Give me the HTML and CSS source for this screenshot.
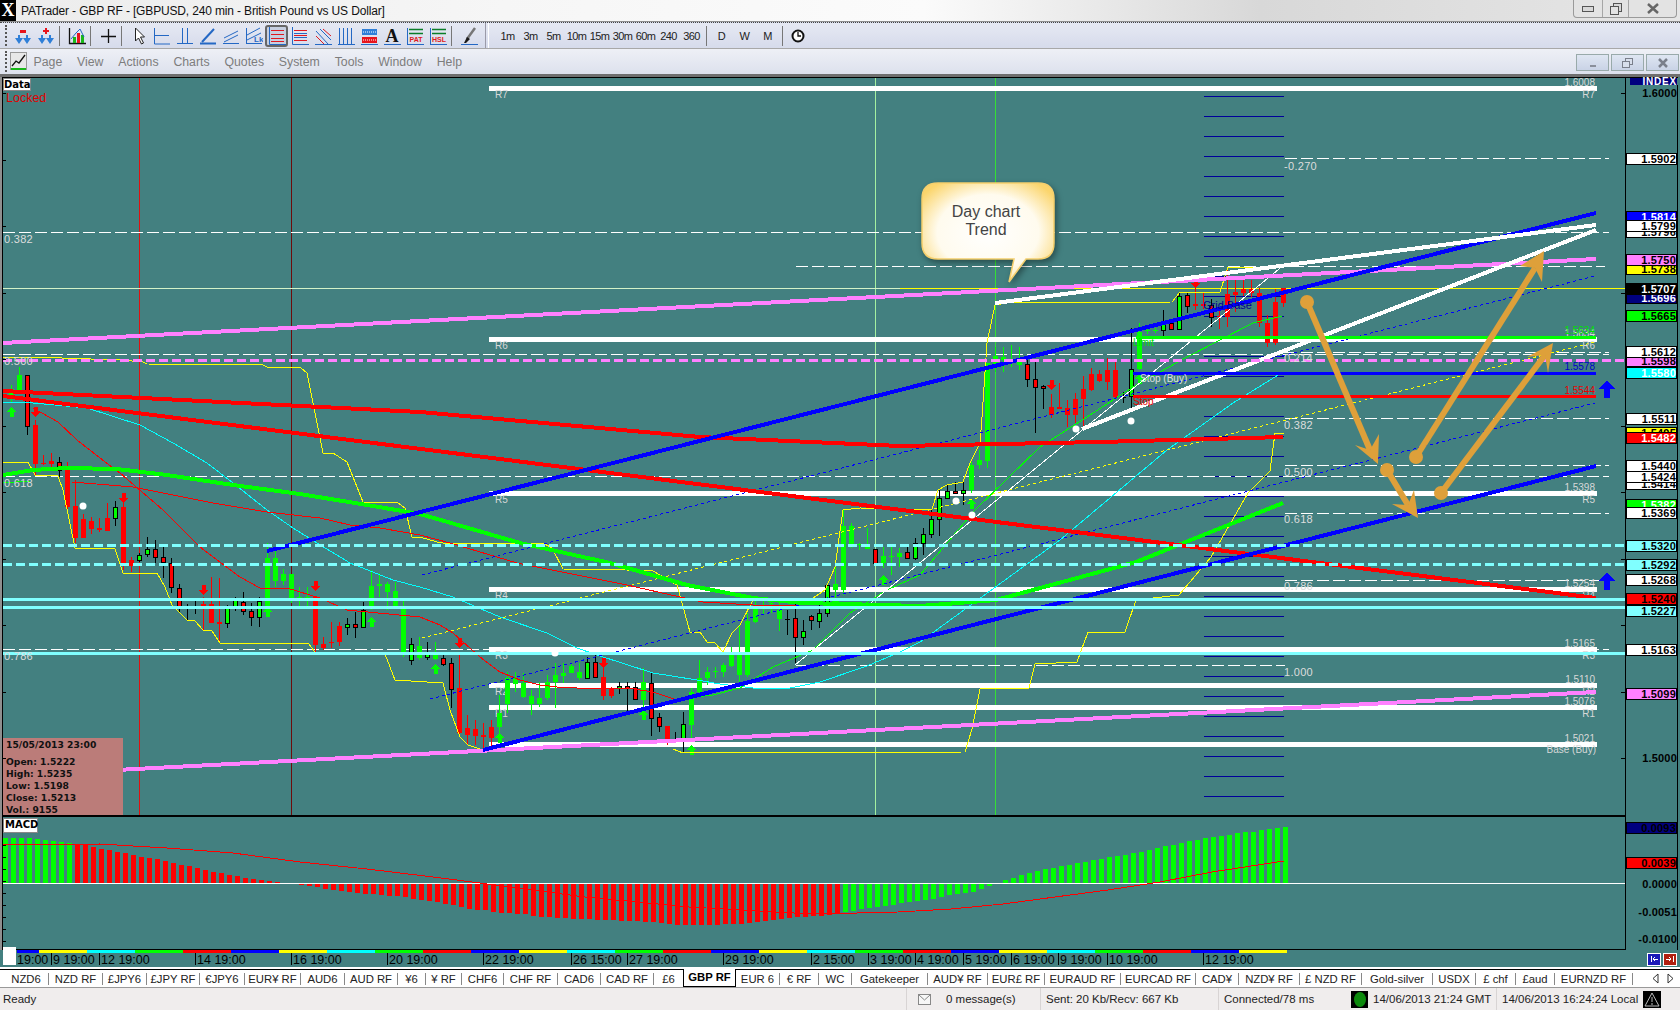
FILE: index.html
```html
<!DOCTYPE html>
<html lang="en">
<head>
    <meta charset="UTF-8">
    <title>PATrader - GBP RF</title>
    <link rel="stylesheet" href="styles.css">
</head>
<body>
    <div class="titlebar">
        <span class="logo">X</span>
        <span class="title-text">PATrader - GBP RF - [GBPUSD, 240 min - British Pound vs US Dollar]</span>
        <div class="winbtns">
            <span class="winbtn btn-min"><svg width="12" height="6"><rect x="0.5" y="0.5" width="11" height="5" class="wb-line"/></svg></span>
            <span class="winbtn btn-max"><svg width="12" height="12"><rect x="3.5" y="0.5" width="8" height="8" class="wb-line"/><rect x="0.5" y="3.5" width="8" height="8" class="wb-fill"/></svg></span>
            <span class="winbtn btn-close"><svg width="12" height="11"><path d="M1 1l10 9M11 1L1 10" class="wb-x"/></svg></span>
        </div>
    </div>

    <div class="toolbar">
        <span class="grip"></span>
        <span class="tool"><svg width="18" height="18"><rect class="f-red" x="6" y="3" width="6" height="3"/><path class="f-blue" d="M1 11h3V8h2v3h3l-4 6zM9 11h3V8h2v3h3l-4 6z"/></svg></span>
        <span class="tool"><svg width="18" height="18"><path class="f-red" d="M8 1h2v2h2v2h-2v2H8V5H6V3h2z"/><path class="f-blue" d="M1 11h3V8h2v3h3l-4 6zM9 11h3V8h2v3h3l-4 6z"/></svg></span>
        <span class="sep"></span>
        <span class="tool"><svg width="18" height="18"><path class="s-black" d="M1.5 1v15.5H18"/><rect class="f-green" x="5" y="10" width="3" height="6"/><rect class="f-red" x="9" y="6" width="3" height="10"/><rect class="f-green" x="13" y="8" width="3" height="8"/><path class="s-blue" d="M3 12l5-6 4-4 4 8"/></svg></span>
        <span class="sep"></span>
        <span class="tool"><svg width="18" height="18"><path class="s-black" d="M9.5 2v14M2 9.5h15"/></svg></span>
        <span class="sep"></span>
        <span class="tool"><svg width="18" height="18"><path class="f-cursor" d="M5.5 1v13l3-3 3 6 2-1-3-6h4z"/></svg></span>
        <span class="tool"><svg width="18" height="18"><path class="s-blue" d="M1.5 1v16H17M1.5 8.5H16"/></svg></span>
        <span class="tool"><svg width="18" height="18"><path class="s-blue" d="M1 16.5h16M6.5 1v16M11.5 1v16"/></svg></span>
        <span class="tool"><svg width="18" height="18"><path class="s-blue-2" d="M1 16.5h16"/><path class="s-blue-2" d="M3 15L15 2"/></svg></span>
        <span class="tool"><svg width="18" height="18"><path class="s-blue" d="M1 16.5h16M2 11l14-7M2 15l14-7"/></svg></span>
        <span class="tool"><svg width="18" height="18"><path class="s-blue" d="M1 16.5h16M1.5 1v16M2 8l13-7M2 13l14-7"/><text x="9" y="15" class="ic-lk">Lk</text></svg></span>
        <span class="tool tool-on"><svg width="18" height="18"><path class="s-blue" d="M1.5 0v17.5H18"/><path class="s-red" d="M3 3.5h13M3 7.5h13M3 11.5h13M3 14.5h13"/></svg></span>
        <span class="tool"><svg width="18" height="18"><path class="s-blue" d="M1.5 0v17.5H18"/><path class="s-red" d="M3 3.5h13M3 8.5h13M3 13.5h13"/><path class="s-blue" d="M3 6.5h13M3 10.5h13"/></svg></span>
        <span class="tool"><svg width="18" height="18"><path class="s-blue" d="M1 17.5h17M2 4l12 13M6 2l11 11"/><path class="s-red" d="M2 9l8 8M9 2l8 7"/></svg></span>
        <span class="tool"><svg width="18" height="18"><path class="s-blue" d="M1 17.5h17M2.5 1v16M6.5 1v16M10.5 1v16M14.5 1v16"/></svg></span>
        <span class="tool"><svg width="18" height="18"><path class="s-blue" d="M1 17.5h17"/><rect class="f-blue" x="2" y="2" width="15" height="6"/><rect class="f-red" x="2" y="10" width="15" height="6"/><path class="s-dots" d="M3 5h13M3 13h13"/></svg></span>
        <span class="tool"><svg width="18" height="18"><text x="9" y="15" class="ic-a">A</text><path class="s-blue" d="M1 17.5h17"/></svg></span>
        <span class="tool"><svg width="18" height="18"><path class="s-green" d="M3 2.5h14M3 6.5h14"/><path class="s-blue" d="M1 17.5h17M1.5 1v16"/><text x="10" y="15" class="ic-tag">PAT</text></svg></span>
        <span class="tool"><svg width="18" height="18"><path class="s-green" d="M3 2.5h14M3 6.5h14"/><path class="s-blue" d="M1 17.5h17M1.5 1v16"/><text x="10" y="15" class="ic-tag">HSL</text></svg></span>
        <span class="sep"></span>
        <span class="tool"><svg width="18" height="18"><path class="s-blue" d="M1 17.5h17"/><path class="s-pen" d="M15 1L7 12"/><path class="f-dark" d="M7 10l3 2-4 4-2 0z"/></svg></span>
        <span class="grip grip-mid"></span>
        <span class="period">1m</span><span class="period">3m</span><span class="period">5m</span><span class="period">10m</span><span class="period">15m</span><span class="period">30m</span><span class="period">60m</span><span class="period">240</span><span class="period">360</span>
        <span class="sep sep-wide"></span>
        <span class="period">D</span><span class="period">W</span><span class="period">M</span>
        <span class="sep sep-wide"></span>
        <span class="tool"><svg width="18" height="18"><circle cx="9" cy="9" r="5.5" class="s-clock"/><path class="s-black" d="M9 5v4h3"/></svg></span>
    </div>

    <div class="menubar">
        <span class="grip"></span>
        <span class="menu-icon"><svg width="17" height="20"><rect x="0.5" y="0.5" width="16" height="17" class="mi-box"/><path class="s-black" d="M2 14l4-5 3 2 6-8"/><rect class="f-green" x="1" y="16" width="15" height="2"/></svg></span>
        <span class="menu-item">Page</span>
        <span class="menu-item">View</span>
        <span class="menu-item">Actions</span>
        <span class="menu-item">Charts</span>
        <span class="menu-item">Quotes</span>
        <span class="menu-item">System</span>
        <span class="menu-item">Tools</span>
        <span class="menu-item">Window</span>
        <span class="menu-item">Help</span>
        <div class="docbtns">
            <span class="docbtn"><svg width="10" height="10"><rect x="2" y="7" width="6" height="2" class="db-fill"/></svg></span>
            <span class="docbtn"><svg width="12" height="10"><rect x="3.5" y="0.5" width="7" height="6" class="db-line"/><rect x="0.5" y="3.5" width="7" height="6" class="db-line"/></svg></span>
            <span class="docbtn"><svg width="10" height="10"><path d="M1 1l8 8M9 1L1 9" class="db-x"/></svg></span>
        </div>
    </div>

    <svg id="chart" class="chart" viewBox="0 77 1680 890" width="1680" height="890">
        <defs>
            <radialGradient id="calloutFill" cx="50%" cy="50%" r="62%">
                <stop offset="0" stop-color="#ffffff"/>
                <stop offset="0.62" stop-color="#fffbee"/>
                <stop offset="1" stop-color="#fbd56c"/>
            </radialGradient>
        </defs>
        <g id="plot" class="plot"></g>
        <g id="arrows"></g>
        <g class="callout">
            <path class="callout-shape" d="M938 183H1038Q1054 183 1054 199V243Q1054 259 1038 259H1026L1009 282L1014 259H938Q922 259 922 243V199Q922 183 938 183Z"/>
            <text x="986" y="217" class="callout-text">Day chart</text>
            <text x="986" y="235" class="callout-text">Trend</text>
        </g>
    </svg>

    <div id="tabs" class="tabs"></div>

    <div class="statusbar">
        <span class="st-ready">Ready</span>
        <span class="st-cell st-mail"><svg width="13" height="11"><rect x="0.5" y="0.5" width="12" height="10" class="mail"/><path class="mail" d="M1 1l5.500 5 5.500-5"/></svg></span>
        <span class="st-cell st-msg">0 message(s)</span>
        <span class="st-cell st-sent">Sent: 20 Kb/Recv: 667 Kb</span>
        <span class="st-cell st-conn">Connected/78 ms</span>
        <span class="st-led"><i></i></span>
        <span class="st-cell st-gmt">14/06/2013 21:24 GMT</span>
        <span class="st-cell st-local">14/06/2013 16:24:24 Local</span>
        <span class="st-warn"><svg width="16" height="15"><path d="M8 1l7 13H1z" class="warn"/><path d="M8 5v5M8 11v2" class="warn"/></svg></span>
    </div>

    <script src="chart.js"></script>
</body>
</html>
```

FILE: styles.css
```css
html, body {
    margin: 0;
    padding: 0;
}
body {
    width: 1680px;
    height: 1010px;
    overflow: hidden;
    background: #ffffff;
    font-family: "Liberation Sans", Arial, sans-serif;
    display: flex;
    flex-direction: column;
}
svg {
    display: block;
}

/* title bar */
.titlebar {
    height: 22px;
    flex: none;
    display: flex;
    align-items: center;
    box-sizing: border-box;
    border-bottom: 1px solid #8e8e8e;
    background: linear-gradient(90deg, #ececec, #f6f6f6 30%, #fbfbfb 55%, #d8d8d8 75%, #e6e6e6);
}
.logo {
    width: 16px;
    height: 21px;
    background: #000;
    color: #fff;
    font: bold 18px/21px "Liberation Serif", serif;
    text-align: center;
}
.title-text {
    margin-left: 5px;
    font-size: 12px;
    letter-spacing: -0.15px;
    color: #111;
}
.winbtns {
    margin-left: auto;
    margin-right: 3px;
    height: 17px;
    align-self: flex-start;
    display: flex;
    border: 1px solid #9a9a9a;
    border-top: 0;
    border-radius: 0 0 4px 4px;
    background: #e3e3e3;
}
.winbtn {
    display: flex;
    align-items: center;
    justify-content: center;
    border-right: 1px solid #a6a6a6;
}
.winbtn:last-child {
    border-right: 0;
}
.btn-min { width: 28px; }
.btn-max { width: 25px; }
.btn-close { width: 47px; }
.wb-line { fill: #d8d8d8; stroke: #555; }
.wb-fill { fill: #e3e3e3; stroke: #555; }
.wb-x { fill: none; stroke: #666; stroke-width: 2.5; }

/* toolbars */
.toolbar {
    height: 27px;
    flex: none;
    box-sizing: border-box;
    display: flex;
    align-items: center;
    padding-left: 11px;
    position: relative;
    border-top: 1px dotted #444;
    border-bottom: 1px solid #a8a8a8;
    background: linear-gradient(#e6e9f3, #d6dbeb);
}
.grip {
    position: absolute;
    left: 5px;
    top: 2px;
    bottom: 2px;
    width: 2px;
    border-left: 2px dotted #555;
}
.grip-mid {
    position: static;
    align-self: stretch;
    margin: 0 7px 0 5px;
    border-left: 1px solid #9a9aa8;
    border-right: 1px solid #fff;
}
.tool {
    width: 23px;
    height: 22px;
    display: flex;
    align-items: center;
    justify-content: center;
    box-sizing: border-box;
}
.tool-on {
    background: #c6cfe0;
    border: 2px solid #666;
    border-radius: 3px;
}
.sep {
    width: 1px;
    height: 20px;
    margin: 0 5px 0 2px;
    background: #777;
}
.sep-wide {
    margin: 0 3px 0 3px;
}
.period {
    width: 23px;
    font-size: 11px;
    letter-spacing: -0.6px;
    text-align: center;
    color: #222;
}
.f-red { fill: #e8141c; }
.f-blue { fill: #2f7fd8; }
.f-green { fill: #19b819; }
.f-dark { fill: #1a1a1a; }
.f-cursor { fill: #fff; stroke: #222; }
.s-black { fill: none; stroke: #111; stroke-width: 1.3; }
.s-blue { fill: none; stroke: #2468c4; }
.s-blue-2 { fill: none; stroke: #2468c4; stroke-width: 2; }
.s-red { fill: none; stroke: #e01820; }
.s-green { fill: none; stroke: #0a7d28; stroke-width: 1.5; }
.s-dots { fill: none; stroke: #fff; stroke-dasharray: 1 1; }
.s-pen { fill: none; stroke: #777; stroke-width: 2.5; }
.s-clock { fill: #fff; stroke: #111; stroke-width: 2; }
.ic-lk { font: bold 8px "Liberation Sans", sans-serif; fill: #2468c4; }
.ic-a { font: bold 18px "Liberation Serif", serif; fill: #111; text-anchor: middle; }
.ic-tag { font: bold 7px "Liberation Sans", sans-serif; fill: #e01820; text-anchor: middle; }

.menubar {
    height: 28px;
    flex: none;
    box-sizing: border-box;
    display: flex;
    align-items: center;
    position: relative;
    padding-left: 10px;
    border-bottom: 3px solid #6f6f6f;
    background: linear-gradient(#eef0f6, #dde1ed);
}
.menu-icon {
    width: 17px;
}
.mi-box { fill: #e8e8e8; stroke: #999; }
.menu-item {
    font-size: 12.300px;
    color: #7d7d7d;
    margin-left: 6.500px;
    margin-right: 8.300px;
}
.docbtns {
    position: absolute;
    right: 1px;
    top: 5px;
    display: flex;
    gap: 2px;
}
.docbtn {
    width: 31px;
    height: 15px;
    display: flex;
    align-items: center;
    justify-content: center;
    border: 1px solid #9aa;
    background: linear-gradient(#dfe6f2, #c9d3e6);
}
.db-fill { fill: #8a8f9b; }
.db-line { fill: #d8dfec; stroke: #7a7f8b; }
.db-x { fill: none; stroke: #7a7f8b; stroke-width: 2.5; }

/* chart canvas */
.chart {
    flex: none;
    background: #438080;
}
.plot {
    shape-rendering: crispEdges;
}
.bg-edge { fill: #8f8f8f; }
.c-black { fill: #000; }
.c-white { fill: #fff; }
.c-time { fill: #438080; }
.dot { fill: #fff; shape-rendering: auto; }
.ln { fill: none; stroke-width: 1; }
.ln-3 { fill: none; stroke-width: 3; }
.ln-4 { fill: none; stroke-width: 4; }
.ln-5 { fill: none; stroke-width: 5; }
.red { stroke: #ff0000; }
.darkred { stroke: #6e0b0b; }
.red-v { stroke: #e01010; }
.paleg { stroke: #a4f0a0; }
.lime { stroke: #00ff00; }
.limev { stroke: #33e033; }
.blue { stroke: #0000ff; }
.navy { stroke: #00009a; }
.white { stroke: #ffffff; }
.yellow { stroke: #ffff00; }
.cyan { stroke: #00ffff; }
.cyan2 { stroke: #80ffff; }
.pink { stroke: #ff80ff; }
.black { stroke: #000; }
.pale { stroke: #d4f2c8; }
.dash-w { stroke-dasharray: 12 4; }
.dash-v { stroke-dasharray: 9 4; }
.dash-c { stroke-dasharray: 9 4; }
.dash-t { stroke-dasharray: 3 3; }

.body-g { fill: #00ff00; }
.body-r { fill: #ff0000; }
.body-gb { fill: #00ff00; stroke: #000; }
.body-rb { fill: #ff0000; stroke: #000; }

.fib {
    font: 11px "Liberation Sans", sans-serif;
    fill: #dddddd;
    letter-spacing: 0.3px;
}
.pv { font: 10px "Liberation Sans", sans-serif; fill: #d8d8d8; }
.end { text-anchor: end; }
.pv-lime { font: 10px "Liberation Sans", sans-serif; fill: #00e000; text-anchor: end; }
.pv-blue { font: 10px "Liberation Sans", sans-serif; fill: #0000c8; text-anchor: end; }
.pv-red { font: 10px "Liberation Sans", sans-serif; fill: #e80000; text-anchor: end; }
.tag-white { font: 10px "Liberation Sans", sans-serif; fill: #e0e0e0; }
.tag-lime { font: 10px "Liberation Sans", sans-serif; fill: #00e000; }
.tag-red { font: 10px "Liberation Sans", sans-serif; fill: #e80000; }
.tag-blue { font: 11px "Liberation Sans", sans-serif; fill: #000090; }

.axis-box { stroke: #000; }
.bx-white { fill: #fff; }
.bx-blue { fill: #0000ff; }
.bx-navy { fill: #00007f; }
.bx-pink { fill: #ff80ff; }
.bx-yellow { fill: #ffff00; }
.bx-black { fill: #000; }
.bx-green { fill: #00ff00; }
.bx-cyan { fill: #00ffff; }
.bx-cyan2 { fill: #80ffff; }
.bx-red { fill: #ff0000; }
.axis-text {
    font: bold 11px "Liberation Sans", sans-serif;
    text-anchor: end;
    fill: #000;
    letter-spacing: 0.2px;
}
.axis-text.light { fill: #fff; }
.index-text {
    font: bold 10px "Liberation Sans", sans-serif;
    fill: #fff;
    text-anchor: end;
    letter-spacing: 0.8px;
}
.panel-box { fill: #fff; stroke: #888; }
.panel-text { font: bold 10px "DejaVu Sans", sans-serif; fill: #000; }
.locked { font: 12.500px "Liberation Sans", sans-serif; fill: #e00000; }
.info-box { fill: #bb7c79; }
.info-text { font: bold 9.200px "DejaVu Sans", sans-serif; fill: #111; }
.time-text { font: 12.500px "Liberation Sans", sans-serif; fill: #000; }
.nav-blue { fill: #1a1ab8; stroke: #fff; }
.nav-red { fill: #b02010; stroke: #fff; }
.nav-mark { fill: none; stroke: #fff; }

.arrow-line { fill: none; stroke: #dea03a; stroke-width: 6; }
.arrow-fill { fill: #dea03a; }
.callout-shape {
    fill: url(#calloutFill);
    stroke: #f5cf6d;
    stroke-width: 1.5;
    filter: drop-shadow(2px 3px 3px rgba(0, 0, 0, 0.4));
}
.callout-text {
    font: 16px "Liberation Sans", sans-serif;
    fill: #444;
    text-anchor: middle;
}

/* tabs */
.tabs {
    height: 19px;
    flex: none;
    box-sizing: border-box;
    margin-top: 2px;
    padding-left: 4px;
    display: flex;
    align-items: center;
    position: relative;
    border-top: 1px solid #000;
    border-bottom: 1px solid #999;
    background: #fff;
    font-size: 11.300px;
    color: #222;
    white-space: nowrap;
}
.tab {
    box-sizing: border-box;
    text-align: center;
    line-height: 12px;
    border-right: 1px solid #888;
    overflow: hidden;
}
.tab-before {
    border-right: 0;
}
.tab-on {
    height: 18px;
    line-height: 17px;
    margin-top: -1px;
    font-weight: bold;
    color: #000;
    background: #fff;
    border-left: 1px solid #000;
    border-right: 1px solid #000;
    border-bottom: 1px solid #000;
}
.tab-nav {
    position: absolute;
    right: 6px;
    top: 3px;
    display: flex;
    gap: 8px;
}
.tn { fill: #fff; stroke: #333; }

/* status bar */
.statusbar {
    flex: 1;
    position: relative;
    display: flex;
    align-items: center;
    background: #f0eded;
    font-size: 11.500px;
    color: #222;
    white-space: nowrap;
}
.st-ready { margin-left: 3px; width: 903px; }
.st-cell {
    box-sizing: border-box;
    padding-left: 5px;
    height: 100%;
    display: flex;
    align-items: center;
    border-left: 1px solid #d8d4d4;
}
.st-mail { width: 35px; padding-left: 11px; }
.st-msg { width: 99px; border-left: 0; }
.st-sent { width: 178px; }
.st-conn { width: 130px; }
.st-gmt { width: 125px; border-left: 0; padding-left: 2px; }
.st-local { width: 143px; }
.mail { fill: #f7f7f7; stroke: #888; }
.st-led {
    width: 17px;
    height: 17px;
    margin: 0 3px;
    background: #000;
    display: flex;
    align-items: center;
    justify-content: center;
}
.st-led i {
    width: 12px;
    height: 15px;
    border-radius: 50%;
    background: #0d8a0d;
}
.st-warn {
    width: 18px;
    height: 17px;
    margin-left: 4px;
    background: #000;
    display: flex;
    align-items: center;
    justify-content: center;
}
.warn { fill: none; stroke: #bbb; }
```

FILE: chart.js
```js
// chart drawing, all coordinates are page pixels
let out = '';

function line(x1, y1, x2, y2, cls) {
    out += `<line x1="${x1}" y1="${y1}" x2="${x2}" y2="${y2}" class="${cls}"/>`;
}
function path(pts, cls) {
    out += `<polyline points="${pts.map(p => p.join(',')).join(' ')}" class="${cls}"/>`;
}
function rect(x, y, w, h, cls) {
    out += `<rect x="${x}" y="${y}" width="${w}" height="${h}" class="${cls}"/>`;
}
function poly(pts, cls) {
    out += `<polygon points="${pts}" class="${cls}"/>`;
}
function text(x, y, str, cls) {
    out += `<text x="${x}" y="${y}" class="${cls}">${str}</text>`;
}

// left edge and vertical session lines
rect(0, 77, 2, 873, 'bg-edge');
rect(2, 77, 1, 873, 'c-black');
line(3, 77.5, 1680, 77.5, 'ln black');
line(139.5, 78, 139.5, 816, 'ln red-v');
line(291.5, 78, 291.5, 816, 'ln darkred');
line(875.5, 78, 875.5, 816, 'ln paleg');
line(995.5, 78, 995.5, 816, 'ln limev');

// grid block behind the last bars
for (let y = 96; y <= 816; y += 20) line(1204, y + 0.5, 1284, y + 0.5, 'ln navy');

// fibonacci dashes
[232, 354, 476, 649].forEach(y => line(3, y + 0.5, 1609, y + 0.5, 'ln white dash-w'));
[158, 352, 418, 465, 513, 580].forEach(y => line(1285, y + 0.5, 1609, y + 0.5, 'ln white dash-w'));
line(796, 266.5, 1605, 266.5, 'ln white dash-w');
line(796, 665.5, 1285, 665.5, 'ln white dash-w');
line(3, 288.5, 900, 288.5, 'ln pale');
line(900, 288.5, 1625, 288.5, 'ln yellow');

// pivot levels
const pivots = [
    ['R7', '1.6008', 88], ['R6', '1.5634', 339], ['R5', '1.5398', 493], ['R4', '1.5254', 589],
    ['R3', '1.5165', 649], ['R2', '1.5110', 685], ['R1', '1.5076', 707], ['', '1.5021', 744]
];
pivots.forEach(p => {
    line(489, p[2], 1597, p[2], 'ln-5 white');
    if (p[0]) text(495, p[2] + 10, p[0], 'pv');
    text(1595, p[2] - 2, p[1], 'pv end');
    if (p[0]) text(1595, p[2] + 10, p[0], 'pv end');
});
text(1596, 753, 'Base (Buy)', 'pv end');

// candles, each group: y base, then [top, bottom, wick top, wick bottom, kind] in thirds of a pixel
const candles = [
    [340, [
        [148,165,135,185,'G'],[105,150,80,160,'G'],[105,257,105,285,'r'],[255,372,240,405,'R'],[370,373,345,375,'R'],
        [363,372,338,385,'R'],[365,390,350,410,'r'],[390,500,365,510,'R'],[498,593,420,610,'R'],[538,593,522,595,'R'],
        [543,567,530,582,'R'],[565,570,535,575,'R'],[534,572,490,573,'R'],[502,535,483,558,'g'],[502,670,490,690,'R'],
        [660,678,650,695,'R'],[644,661,640,665,'g'],[628,643,590,650,'g'],[628,650,600,670,'r'],[650,667,620,715,'r'],
        [668,742,655,760,'r'],[743,800,733,815,'r'],[800,801,792,840,'d'],[800,801,780,822,'d'],[792,797,770,870,'R'],
        [792,850,710,850,'R'],[847,851,715,905,'R'],[805,850,795,865,'g'],[780,800,770,812,'g'],[785,812,755,825,'r'],
        [812,830,790,858,'r'],[782,830,772,860,'g'],[653,800,610,825,'G'],[655,723,630,740,'G'],[702,723,687,735,'G'],
        [702,775,702,790,'G'],[770,773,742,800,'G'],[770,775,742,800,'G'],[770,915,770,935,'R'],[912,925,890,930,'R'],
        [907,909,845,925,'R'],[858,905,845,918,'R'],[853,860,835,885,'g'],[853,860,815,893,'r'],[810,860,785,860,'g'],
        [738,808,690,810,'G'],[733,738,700,770,'G'],[733,755,725,810,'G'],[753,800,725,805,'G'],[805,942,780,950,'G'],
        [912,960,895,975,'g'],[918,954,890,960,'G']
    ]],
    [500, [
        [455,472,425,480,'g'],[455,478,425,480,'G'],[475,492,465,498,'r'],[490,568,473,625,'r'],[565,700,465,710,'R'],
        [685,705,645,735,'R'],[688,708,660,735,'R'],[705,712,670,745,'R'],[682,714,660,740,'R'],[640,682,585,700,'G'],
        [535,612,515,640,'G'],[535,552,515,575,'G'],[548,590,520,595,'G'],[588,612,570,645,'G'],[595,612,545,620,'G'],
        [545,595,525,600,'G'],[525,545,488,625,'G'],[520,528,490,550,'G'],[498,518,490,520,'G'],[517,535,490,540,'G'],
        [487,533,470,535,'g'],[487,530,465,535,'r'],[530,588,505,600,'R'],[565,588,560,595,'R'],[557,565,545,582,'g'],
        [557,564,545,635,'r'],[562,598,545,600,'r'],[547,600,505,620,'G'],[548,655,520,708,'r'],[652,678,640,695,'r'],
        [677,718,677,735,'R'],[716,717,697,730,'d'],[673,716,635,760,'g'],[575,675,565,715,'G'],[535,575,480,580,'G'],
        [515,535,500,555,'G'],[513,514,500,535,'G'],[495,515,490,530,'G'],[465,498,440,500,'G'],[465,525,375,545,'G'],
        [363,525,340,530,'G'],[328,365,300,370,'G'],[325,328,300,345,'G'],[310,312,305,340,'G'],[330,358,310,392,'G'],
        [357,358,330,405,'d'],[355,410,305,490,'r'],[392,410,360,435,'g'],[349,361,345,390,'r'],[340,362,315,385,'g'],
        [255,340,250,350,'g'],[252,270,195,310,'G'],[78,270,30,285,'G'],[78,135,68,145,'G'],[133,136,130,150,'G']
    ]],
    [430, [
        [343,358,295,358,'G'],[357,398,357,398,'r'],[378,398,350,415,'G'],[378,380,350,435,'G'],[370,380,355,410,'G'],
        [367,383,350,385,'r'],[340,383,325,390,'g'],[313,340,295,375,'g'],[267,313,240,325,'g'],[205,268,178,318,'g'],
        [184,205,165,205,'g'],[184,190,155,190,'r'],[181,190,155,225,'g'],[105,180,95,190,'G'],[90,106,60,118,'G'],
        [-201,92,-201,115,'G']
    ]],
    [170, [
        [558,582,530,605,'G'],[562,570,530,605,'G'],[566,570,525,590,'G'],[572,585,530,600,'G'],[583,628,558,652,'r'],
        [628,650,572,788,'r'],[648,655,645,716,'r'],[712,735,672,745,'R'],[712,716,640,718,'R'],[715,735,690,770,'R'],
        [688,735,670,760,'R'],[658,688,618,770,'R'],[612,660,595,662,'R'],[612,632,600,635,'R'],[600,635,565,660,'R'],
        [600,680,570,685,'R'],[680,681,665,698,'d'],[596,678,475,715,'g'],[485,597,460,600,'G'],[480,482,475,492,'G'],
        [480,482,475,488,'G'],[453,480,420,500,'g'],[460,478,455,480,'r'],[378,478,365,478,'g'],[376,408,370,428,'r'],
        [402,408,350,420,'R'],[403,407,365,418,'R'],[405,442,388,470,'r'],[438,442,410,478,'R'],[372,440,290,472,'R'],
        [367,374,320,425,'R'],[358,368,330,378,'R'],[358,368,330,380,'R'],[370,460,355,470,'R'],[460,518,435,530,'R'],
        [396,520,356,525,'R'],[354,398,353,412,'R']
    ]]
];

let k = 0;
candles.forEach(group => {
    const base = group[0];
    group[1].forEach(c => {
        const x = Math.round(11.33 + 8 * k);
        const top = Math.round(base + c[0] / 3);
        const bot = Math.max(Math.round(base + c[1] / 3), top + 1);
        const wt = Math.round(base + c[2] / 3);
        const wb = Math.round(base + c[3] / 3);
        const kind = c[4];
        const wick = kind === 'G' ? 'lime' : kind === 'R' ? 'red' : 'black';
        line(x + 0.5, wt, x + 0.5, wb, 'ln ' + wick);
        if (kind === 'G') rect(x - 2, top, 5, bot - top, 'body-g');
        if (kind === 'R') rect(x - 2, top, 5, bot - top, 'body-r');
        if (kind === 'g') rect(x - 1.5, top + 0.5, 4, bot - top, 'body-gb');
        if (kind === 'r') rect(x - 1.5, top + 0.5, 4, bot - top, 'body-rb');
        if (kind === 'd') line(x - 2, top + 0.5, x + 3, top + 0.5, 'ln black');
        k++;
    });
});

// small buy and sell markers
function marker(idx, y, up) {
    const x = Math.round(11.33 + 8 * idx) + 0.5;
    if (up) poly(`${x - 5},${y} ${x},${y - 5} ${x + 5},${y} ${x + 2},${y} ${x + 2},${y + 5} ${x - 2},${y + 5} ${x - 2},${y}`, 'body-g');
    else poly(`${x - 5},${y} ${x},${y + 5} ${x + 5},${y} ${x + 2},${y} ${x + 2},${y - 5} ${x - 2},${y - 5} ${x - 2},${y}`, 'body-r');
}
[[0,412],[45,622],[32,612],[53,669],[61,738],[79,715],[85,750],[103,603],[109,580],[120,504],[141,379]].forEach(m => marker(m[0], m[1], true));
[[3,412],[14,498],[24,590],[38,586],[56,643],[74,663],[130,385],[148,283]].forEach(m => marker(m[0], m[1], false));

// thin indicator lines
path([[3,357],[33,357],[120,360],[143,362],[147,364],[263,365],[267,367],[300,367],[307,373],[313,403],[323,453],[333,453],[347,462],[363,502],[397,502],[405,508],[412,537],[420,537],[437,542],[443,543],[543,543],[552,548],[563,569],[627,570],[653,571],[677,585],[690,632],[700,632],[707,642],[715,643],[723,652],[732,633],[740,625],[753,600],[810,600],[825,590],[835,567],[843,510],[860,508],[898,509],[932,509],[938,490],[947,485],[963,482],[970,463],[980,443],[982,417],[987,343],[995,305],[1007,303],[1172,302],[1180,292],[1220,292],[1228,267],[1258,267]], 'ln yellow');
path([[3,462],[28,462],[35,475],[58,476],[63,490],[75,548],[115,549],[123,573],[157,573],[165,587],[172,605],[187,620],[195,621],[203,630],[212,631],[220,643],[308,643],[315,652],[385,654],[395,680],[443,683],[450,710],[460,737],[468,745],[483,750],[530,749],[673,749],[683,753],[965,752],[972,729],[980,689],[1029,688],[1035,664],[1077,662],[1088,632],[1125,632],[1136,600],[1179,595],[1211,557],[1248,493],[1270,471],[1275,433],[1284,433]], 'ln yellow');
path([[3,402],[33,403],[87,408],[140,425],[173,443],[207,463],[233,483],[267,510],[293,528],[317,543],[350,563],[393,580],[420,587],[453,597],[500,617],[547,633],[577,648],[597,655],[653,673],[697,680],[720,684],[753,688],[790,688],[820,682],[867,666],[900,652],[920,642],[1060,540],[1167,450],[1233,403],[1283,372]], 'ln cyan');
path([[33,408],[58,422],[77,440],[100,458],[120,473],[163,510],[200,547],[240,577],[260,588],[287,588],[320,598],[347,610],[420,617],[440,625],[453,633],[480,657],[500,672],[520,680],[540,685],[557,687],[577,688],[627,688],[653,692],[677,700]], 'ln red');
path([[72,482],[133,487],[213,503],[267,512],[320,518],[350,525],[380,528],[420,535],[450,543],[517,563],[627,585],[680,597],[703,602],[753,605],[797,605]], 'ln red');
path([[3,483],[30,481]], 'ln lime');
path([[687,698],[713,695],[740,688],[773,667],[813,650],[850,613],[887,590],[920,575],[975,510],[1040,447],[1087,417],[1133,387],[1187,357],[1253,323],[1282,316]], 'ln lime');
line(422, 638, 1595, 342, 'ln yellow dash-t');
line(422, 575, 1595, 276, 'ln blue dash-t');
line(430, 699, 1595, 403, 'ln blue dash-t');
line(795, 665, 1284, 265, 'ln white');

// thick moving averages and trend lines
path([[3,475],[33,470],[67,468],[117,469],[167,475],[233,485],[300,494],[367,505],[420,514],[520,543],[610,563],[687,585],[753,598],[803,603],[920,606],[996,600],[1136,562],[1283,503]], 'ln-4 lime');
path([[3,391],[420,412],[700,437],[900,446],[1000,444],[1100,442],[1283,437]], 'ln-4 red');
line(3, 396, 1596, 598, 'ln-4 red');
line(3, 343, 1596, 259, 'ln-4 pink');
line(3, 776, 1596, 692, 'ln-4 pink');
line(267, 551, 1596, 213, 'ln-4 blue');
line(483, 750, 1596, 466, 'ln-4 blue');
line(995, 303, 1596, 225, 'ln-4 white');
line(1082, 429, 1596, 230, 'ln-4 white');

// levels from the last trade
line(1136, 337, 1596, 337, 'ln-3 lime');
line(1133, 373, 1596, 373, 'ln-3 blue');
line(1133, 396, 1596, 396, 'ln-3 red');
text(1595, 334, '1.5634', 'pv-lime');
text(1595, 370, '1.5578', 'pv-blue');
text(1595, 394, '1.5544', 'pv-red');
text(1140, 382, 'Stop (Buy)', 'tag-white');
text(1133, 346, 'Limit', 'tag-lime');
text(1133, 405, 'Stop', 'tag-red');
text(1203, 309, 'Grid Base', 'tag-blue');

line(3, 545.5, 1625, 545.5, 'ln-3 cyan2 dash-c');
line(3, 564.5, 1625, 564.5, 'ln-3 cyan2 dash-c');
line(3, 360, 1625, 360, 'ln-3 pink dash-v');
[599, 607, 653].forEach(y => line(3, y, 1625, y, 'ln-3 cyan2'));

// dots
[[83,506],[555,653],[956,501],[972,515],[1076,429],[1131,421]].forEach(d => {
    out += `<circle cx="${d[0]}" cy="${d[1]}" r="3.500" class="dot"/>`;
});

// blue arrows right of the levels
poly('1607,380 1615,389 1610,389 1610,398 1604,398 1604,389 1599,389', 'bx-blue');
poly('1607,572 1615,581 1610,581 1610,590 1604,590 1604,581 1599,581', 'bx-blue');

// fib labels
[[4,243,'0.382'],[4,365,'0.500'],[4,487,'0.618'],[4,660,'0.786'],[1284,170,'-0.270'],[1284,362,'0.214'],[1284,429,'0.382'],[1284,476,'0.500'],[1284,523,'0.618'],[1284,590,'0.786'],[1284,676,'1.000']].forEach(f => text(f[0], f[1], f[2], 'fib'));

// info panels
rect(3, 78.5, 27, 12, 'panel-box');
text(4, 88, 'Data', 'panel-text');
text(6, 102, 'Locked', 'locked');
rect(3, 738, 120, 78, 'info-box');
['15/05/2013 23:00', '', 'Open: 1.5222', 'High: 1.5235', 'Low: 1.5198', 'Close: 1.5213', 'Vol.: 9155'].forEach((t, i) => {
    const ys = [748, 0, 765, 777, 789, 801, 813];
    if (t) text(6, ys[i], t, 'info-text');
});

// pane divider and MACD pane
rect(3, 815, 1622, 2, 'c-black');
rect(3, 818, 34, 14, 'panel-box');
text(5, 828, 'MACD', 'panel-text');
const zero = 883;
function macdGreen(j) {
    return j <= 8 || j >= 105;
}
function macdBar(j, y) {
    const x = Math.round(4.67 + 8 * j) - 2;
    const left = Math.max(x, 3);
    const cls = macdGreen(j) ? 'body-g' : 'body-r';
    rect(left, Math.min(y, zero), x + 5 - left, Math.abs(y - zero), cls);
}
const macdA = [353,353,353,353,357,360,363,366,369,372,376,380,386,390,395,399,405,411,413,417,423,429,435,437,443,449,456,459,464,468,473,477,480,483,486,488,492,495,497,501,507,510,513,516,519,522,522,525,527,529,532,537,540,542,546,552,555,561,567,570];
macdA.forEach((v, j) => macdBar(j, 720 + v / 3));
const macdB = [285,290,293,295,296,297,302,305,306,308,310,312,312,312,315,315,316,317,317,318,320,322,324,328,330,330,330,330,330,329,328,326,327,324,320,318,315,311,308,305,305,303,302,300,298,291,287,282,279,277,274,270,265,262,259,255,251,246,240,238,233,230,221,213,205,195,189,180,174,168,162,159,154,150,143,140,134,131,125,123,120,114,111,105,99,93,90,84,78,75,70,66,63,60,55,52,50,46,43,40,36];
macdB.forEach((v, j) => macdBar(j + 60, 815 + v / 3));
line(3, zero + 0.5, 1625, zero + 0.5, 'ln white');
path([[3,845],[100,844],[133,846],[167,848],[233,853],[300,862],[367,869],[433,877],[480,883],[532,890],[585,897],[637,902],[689,907],[741,910],[794,913],[857,913],[898,912],[951,909],[1003,904],[1055,897],[1108,890],[1160,882],[1212,872],[1284,861]], 'ln red');
for (let y = 845; y < 950; y += 12) line(3, y + 0.5, 6, y + 0.5, 'ln black');
for (let y = 93; y < 815; y += 66.5) line(3, Math.round(y) + 0.5, 6, Math.round(y) + 0.5, 'ln black');

// right price axis
line(1625.5, 77, 1625.5, 950, 'ln black');
line(1677.5, 85, 1677.5, 950, 'ln black');
rect(1678, 77, 2, 890, 'c-time');
[93, 293, 426, 492, 559, 625, 692, 758].forEach(y => line(1621, y + 0.5, 1625, y + 0.5, 'ln black'));
rect(1630, 78, 47, 7, 'bx-navy');
text(1677, 85, 'INDEX', 'index-text');
text(1677, 97, '1.6000', 'axis-text');
text(1677, 762, '1.5000', 'axis-text');

// drawn back to front, later boxes cover earlier ones
const labels = [
    ['1.5902', 153, 'white'], ['1.5814', 211, 'blue', 1], ['1.5796', 226, 'white'], ['1.5799', 220, 'white'],
    ['1.5738', 263, 'yellow'], ['1.5750', 254, 'pink'], ['1.5696', 292, 'navy', 1], ['1.5707', 283, 'black', 1],
    ['1.5665', 310, 'green'], ['1.5598', 355, 'pink'], ['1.5612', 346, 'white'], ['1.5580', 367, 'cyan', 1],
    ['1.5511', 413, 'white'], ['1.5495', 427, 'yellow'], ['1.5482', 432, 'red', 1], ['1.5414', 478, 'white'],
    ['1.5424', 471, 'white'], ['1.5440', 460, 'white'], ['1.5382', 499, 'green', 1], ['1.5369', 507, 'white'],
    ['1.5320', 540, 'cyan2'], ['1.5292', 559, 'cyan2'], ['1.5268', 574, 'white'], ['1.5227', 605, 'cyan2'],
    ['1.5240', 593, 'red'], ['1.5163', 644, 'white'], ['1.5099', 688, 'pink'],
    ['0.0093', 822, 'navy', 0], ['0.0039', 857, 'red', 0]
];
labels.forEach(l => {
    rect(1626.5, l[1] + 0.5, 50, 11, 'axis-box bx-' + l[2]);
    text(1676, l[1] + 10, l[0], 'axis-text' + (l[3] ? ' light' : ''));
});
text(1677, 888, '0.0000', 'axis-text');
text(1677, 916, '-0.0051', 'axis-text');
text(1677, 943, '-0.0100', 'axis-text');

// time axis
rect(3, 950, 1677, 17, 'c-time');
rect(3, 949, 1622, 1, 'c-black');
rect(17, 950, 22, 3, 'bx-blue');
['bx-yellow', 'bx-cyan', 'bx-green', 'body-r', 'bx-blue'].forEach((c, i) => {
    for (let x = 39 + 48 * i; x < 1287; x += 240) rect(x, 950, Math.min(48, 1287 - x), 3, c);
});
rect(3, 947, 13, 18, 'bx-white');
[[19,''],[51,'9 19:00'],[99,'12 19:00'],[195,'14 19:00'],[291,'16 19:00'],[387,'20 19:00'],[483,'22 19:00'],[571,'26 15:00'],[627,'27 19:00'],[723,'29 19:00'],[811,'2 15:00'],[868,'3 19:00'],[915,'4 19:00'],[963,'5 19:00'],[1011,'6 19:00'],[1058,'9 19:00'],[1107,'10 19:00'],[1203,'12 19:00']].forEach(t => {
    if (!t[1]) {
        text(17, 964, '19:00', 'time-text');
        return;
    }
    line(t[0] + 0.5, 953, t[0] + 0.5, 965, 'ln black');
    text(t[0] + 2, 964, t[1], 'time-text');
});
rect(1647.5, 953.5, 13, 12, 'nav-blue');
out += '<path d="M1651 956v6M1658 959h-5M1655 957l-2 2 2 2" class="nav-mark"/>';
rect(1663.5, 953.5, 13, 12, 'nav-red');
out += '<path d="M1673 956v6M1666 959h5M1669 957l2 2-2 2" class="nav-mark"/>';

document.getElementById('plot').innerHTML = out;

// hand drawn orange arrows
out = '';
function arrow(dot, tip, barbA, barbB, neck) {
    out += `<circle cx="${dot[0]}" cy="${dot[1]}" r="7" class="arrow-fill"/>`;
    out += `<line x1="${dot[0]}" y1="${dot[1]}" x2="${neck[0]}" y2="${neck[1]}" class="arrow-line"/>`;
    poly(`${tip} ${barbA} ${neck} ${barbB}`, 'arrow-fill');
}
arrow([1307,302], [1378,464], [1355,445], [1379,434], [1370,450]);
arrow([1387,470], [1418,518], [1392,504], [1414,490], [1408,505]);
arrow([1416,457], [1544,251], [1520,266], [1542,282], [1535,268]);
arrow([1441,493], [1553,343], [1527,357], [1548,373], [1545,355]);
document.getElementById('arrows').innerHTML = out;

// symbol tabs, ends are the separator positions
const tabs = [
    ['NZD6',49],['NZD RF',103],['£JPY6',147],['£JPY RF',200],['€JPY6',245],['EUR¥ RF',301],['AUD6',345],['AUD RF',398],
    ['¥6',426],['¥ RF',462],['CHF6',504],['CHF RF',558],['CAD6',601],['CAD RF',654],['£6',683],['GBP RF',736],['EUR 6',780],
    ['€ RF',819],['WC',852],['Gatekeeper',928],['AUD¥ RF',988],['EUR£ RF',1045],['EURAUD RF',1121],['EURCAD RF',1196],
    ['CAD¥',1239],['NZD¥ RF',1300],['£ NZD RF',1362],['Gold-silver',1433],['USDX',1476],['£ chf',1516],['£aud',1555],['EURNZD RF',1633]
];
let start = 4;
let tabHtml = '';
tabs.forEach(t => {
    let cls = 'tab';
    if (t[0] === 'GBP RF') cls += ' tab-on';
    if (t[0] === '£6') cls += ' tab-before';
    tabHtml += `<span class="${cls}" style="width:${t[1] - start}px">${t[0]}</span>`;
    start = t[1];
});
tabHtml += '<span class="tab-nav"><svg width="7" height="11"><path d="M6 1v9L1 5.500z" class="tn"/></svg><svg width="7" height="11"><path d="M1 1v9l5-4.500z" class="tn"/></svg></span>';
document.getElementById('tabs').innerHTML = tabHtml;
```
